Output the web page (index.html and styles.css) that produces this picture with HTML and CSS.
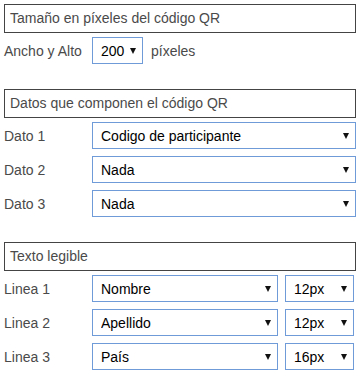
FILE: index.html
```html
<!DOCTYPE html>
<html lang="es">

<head>
    <meta charset="UTF-8">
    <meta name="viewport" content="width=device-width, initial-scale=1.0">
    <title>Código QR</title>

    <link rel="stylesheet" href="styles.css">
</head>

<body>
    <main class="page">
        <section class="group">
            <h2 class="group-title">Tamaño en píxeles del código QR</h2>

            <div class="field">
                <label class="field-label">Ancho y Alto</label>
                <span class="select size-qr">
                    <select>
                        <option>200</option>
                    </select>
                </span>
                <span class="unit">píxeles</span>
            </div>
        </section>

        <section class="group">
            <h2 class="group-title">Datos que componen el código QR</h2>

            <div class="field">
                <label class="field-label">Dato 1</label>
                <span class="select wide">
                    <select>
                        <option>Codigo de participante</option>
                    </select>
                </span>
            </div>

            <div class="field">
                <label class="field-label">Dato 2</label>
                <span class="select wide">
                    <select>
                        <option>Nada</option>
                    </select>
                </span>
            </div>

            <div class="field">
                <label class="field-label">Dato 3</label>
                <span class="select wide">
                    <select>
                        <option>Nada</option>
                    </select>
                </span>
            </div>
        </section>

        <section class="group">
            <h2 class="group-title">Texto legible</h2>

            <div class="field">
                <label class="field-label">Linea 1</label>
                <span class="select line">
                    <select>
                        <option>Nombre</option>
                    </select>
                </span>
                <span class="select font-size">
                    <select>
                        <option>12px</option>
                    </select>
                </span>
            </div>

            <div class="field">
                <label class="field-label">Linea 2</label>
                <span class="select line">
                    <select>
                        <option>Apellido</option>
                    </select>
                </span>
                <span class="select font-size">
                    <select>
                        <option>12px</option>
                    </select>
                </span>
            </div>

            <div class="field">
                <label class="field-label">Linea 3</label>
                <span class="select line">
                    <select>
                        <option>País</option>
                    </select>
                </span>
                <span class="select font-size">
                    <select>
                        <option>16px</option>
                    </select>
                </span>
            </div>
        </section>
    </main>
</body>

</html>
```

FILE: styles.css
```css
:root {
    --text: #4a4a4a;
    --border: #444;
    --select-border: #6f9bd8;
}

* {
    font-family: "Liberation Sans", Arial, sans-serif;
    margin: 0;
    padding: 0;
    box-sizing: border-box;
}

body {
    background-color: #fff;
    color: var(--text);
    font-size: 14px;
}

.page {
    width: 352px;
    margin: 4px 0 0 4px;
    display: flex;
    flex-direction: column;
    gap: 25px;
}

.group {
    display: flex;
    flex-direction: column;
    gap: 7px;
}

.group-title {
    height: 29px;
    border: 1px solid var(--border);
    padding: 0 5px;
    font-size: 14px;
    font-weight: normal;
    line-height: 27px;
    margin-bottom: -3px;
}

.field {
    display: flex;
    align-items: center;
    height: 27px;
}

.field-label {
    width: 88px;
    flex-shrink: 0;
}

.select {
    position: relative;
    display: block;
    height: 27px;
}

.select::after {
    content: "";
    position: absolute;
    right: 7px;
    top: 11px;
    border-left: 3px solid transparent;
    border-right: 3px solid transparent;
    border-top: 6px solid #111;
    pointer-events: none;
}

select {
    appearance: none;
    -webkit-appearance: none;
    width: 100%;
    height: 100%;
    border: 1px solid var(--select-border);
    border-radius: 0;
    background: #fff;
    color: #000;
    font-size: 14px;
    padding: 0 20px 0 8px;
    outline: none;
}

.size-qr {
    width: 51px;
}

.size-qr select {
    padding-right: 12px;
}

.unit {
    margin-left: 8px;
}

.wide {
    width: 264px;
}

.line {
    width: 186px;
}

.font-size {
    width: 69px;
    margin-left: 7px;
}

.font-size select {
    padding-right: 14px;
}
```
